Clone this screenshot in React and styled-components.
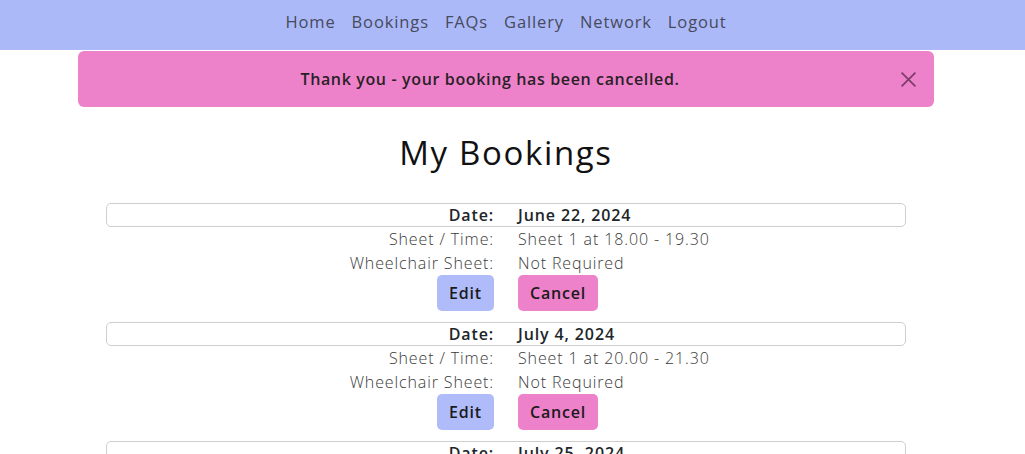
import React from "react";
import styled, { createGlobalStyle } from "styled-components";

const GlobalStyle = createGlobalStyle`
  html, body { margin: 0; padding: 0; background: #fff; }
  body {
    font-family: "Open Sans", "Liberation Sans", sans-serif;
    color: #212529;
    font-size: 16px;
    line-height: 1.5;
    letter-spacing: 0.055em;
  }
  * { box-sizing: border-box; }
`;

const NavBar = styled.nav`
  height: 50px;
  background: #abb9f9;
  display: flex;
  justify-content: center;
  align-items: center;
  padding: 0 13px 5px 0;
`;

const NavLink = styled.a`
  color: #474a5c;
  font-size: 16.5px;
  font-weight: 500;
  padding: 0 8px;
  text-decoration: none;
  cursor: pointer;
`;

const Main = styled.main`
  padding-right: 13px;
`;

const Container = styled.div`
  width: 856px;
  margin: 1px auto 0;
`;

const Alert = styled.div`
  position: relative;
  background: #ee82ca;
  border: 1px solid transparent;
  border-radius: 6px;
  padding: 15px 48px 15px 16px;
  text-align: center;
  font-weight: 600;
  color: #2a1f27;
  line-height: 24px;
  letter-spacing: 0.04em;
`;

const CloseButton = styled.button`
  position: absolute;
  top: 0;
  right: 0;
  padding: 19px 16px;
  border: 0;
  background: transparent;
  display: flex;
  cursor: pointer;
`;

const Title = styled.h1`
  margin: 26px 0 30px;
  text-align: center;
  font-size: 33px;
  font-weight: 500;
  line-height: 40px;
  color: #111;
  letter-spacing: 0.05em;
`;

const BookingList = styled.div`
  width: 800px;
  margin: 0 auto;
`;

const Booking = styled.section`
  margin-bottom: 0;
`;

const Row = styled.div`
  display: grid;
  grid-template-columns: 1fr 1fr;
  border: ${(p) => (p.$boxed ? "1px solid #cfcfcf" : "1px solid transparent")};
  border-radius: 5px;
  line-height: 22px;
  font-weight: ${(p) => (p.$boxed ? 600 : 300)};
  color: ${(p) => (p.$boxed ? "#212529" : "#3a3a3a")};
`;

const Label = styled.div`
  text-align: right;
  padding-right: 12px;
`;

const Value = styled.div`
  padding-left: 12px;
`;

const Actions = styled.div`
  display: grid;
  grid-template-columns: 1fr 1fr;
  padding: 0 0 11px;
`;

const ActionCell = styled.div`
  display: flex;
  justify-content: ${(p) => (p.$end ? "flex-end" : "flex-start")};
  padding: ${(p) => (p.$end ? "0 12px 0 0" : "0 0 0 12px")};
`;

const Button = styled.button`
  height: 36px;
  padding: 0 12px;
  border: 0;
  border-radius: 5px;
  font-family: inherit;
  font-size: 16px;
  font-weight: 600;
  letter-spacing: 0.05em;
  color: #1a1a1a;
  background: ${(p) => (p.$variant === "cancel" ? "#ee82ca" : "#b0bcfa")};
  cursor: pointer;
`;

const bookings = [
  { date: "June 22, 2024", slot: "Sheet 1 at 18.00 - 19.30", wheelchair: "Not Required" },
  { date: "July 4, 2024", slot: "Sheet 1 at 20.00 - 21.30", wheelchair: "Not Required" },
  { date: "July 25, 2024", slot: "Sheet 1 at 18.00 - 19.30", wheelchair: "Not Required" },
];

export default function App() {
  return (
    <>
      <GlobalStyle />
      <NavBar>
        {["Home", "Bookings", "FAQs", "Gallery", "Network", "Logout"].map((l) => (
          <NavLink key={l}>{l}</NavLink>
        ))}
      </NavBar>
      <Main>
        <Container>
          <Alert>
            Thank you - your booking has been cancelled.
            <CloseButton aria-label="Close">
              <svg width="17" height="17" viewBox="0 0 16 16">
                <path d="M1.5 1.5 L14.5 14.5 M14.5 1.5 L1.5 14.5" stroke="#7a3c69" strokeWidth="1.6" fill="none" />
              </svg>
            </CloseButton>
          </Alert>
          <Title>My Bookings</Title>
        </Container>
        <BookingList>
          {bookings.map((b) => (
            <Booking key={b.date}>
              <Row $boxed>
                <Label>Date:</Label>
                <Value>{b.date}</Value>
              </Row>
              <Row>
                <Label>Sheet / Time:</Label>
                <Value>{b.slot}</Value>
              </Row>
              <Row>
                <Label>Wheelchair Sheet:</Label>
                <Value>{b.wheelchair}</Value>
              </Row>
              <Actions>
                <ActionCell $end>
                  <Button>Edit</Button>
                </ActionCell>
                <ActionCell>
                  <Button $variant="cancel">Cancel</Button>
                </ActionCell>
              </Actions>
            </Booking>
          ))}
        </BookingList>
      </Main>
    </>
  );
}
